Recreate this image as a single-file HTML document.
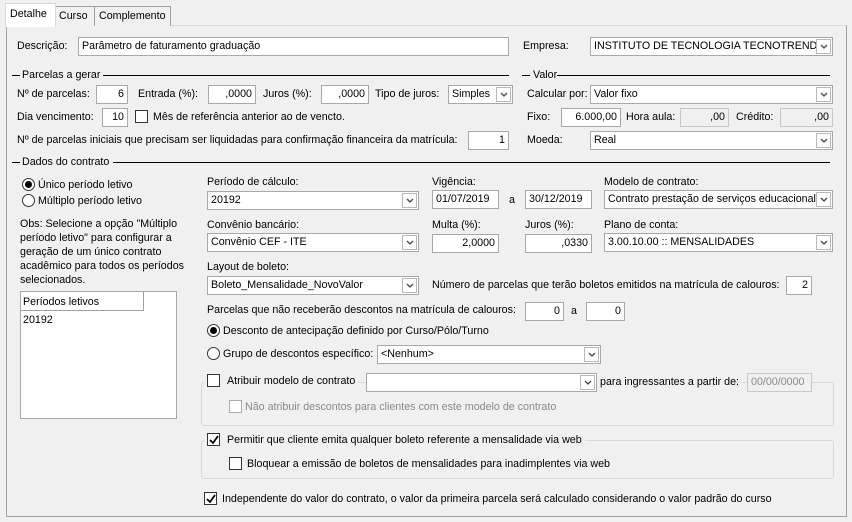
<!DOCTYPE html>
<html><head><meta charset="utf-8"><style>
*{box-sizing:border-box;margin:0;padding:0}
body{width:852px;height:522px;background:#f0f0f0;font:10.7px "Liberation Sans",sans-serif;color:#000;position:relative;overflow:hidden}
.a{position:absolute;white-space:nowrap;line-height:13px}
.i{position:absolute;background:#fff;border:1px solid #a8a8a8;height:19px;line-height:15px;padding:1px 3px;white-space:nowrap;overflow:hidden}
.r{text-align:right}
.d{background:#f0f0f0;border-color:#c8c8c8}
.g{color:#8a8a8a}
.cb{position:absolute;right:1px;top:1px;width:15px;height:15px;border:1px solid #b8b8b8;background:#fff}
.cb svg{position:absolute;left:3px;top:4px}
.ln{position:absolute;height:1px;background:#000}
.chk{position:absolute;width:13px;height:13px;border:1px solid #333;background:#fff}
.chk.dis{border-color:#aaa}
.rad{position:absolute;width:13px;height:13px;border:1px solid #333;border-radius:50%;background:#fff}
.rad.on::after{content:"";position:absolute;left:2px;top:2px;width:7px;height:7px;border-radius:50%;background:#000}
.grp{position:absolute;border:1px solid #d8d8d8;border-radius:3px}
</style></head><body>
<div style="position:absolute;left:6px;top:25px;width:841px;height:492px;border:1px solid #a0a0a0;border-top-color:#d9d9d9"></div>
<div style="position:absolute;left:55px;top:6px;width:40px;height:20px;border:1px solid #a0a0a0;border-bottom:none;background:#f0f0f0"></div>
<div style="position:absolute;left:94px;top:6px;width:77px;height:20px;border:1px solid #a0a0a0;border-bottom:none;background:#f0f0f0"></div>
<div style="position:absolute;left:5px;top:3px;width:51px;height:24px;border:1px solid #d9d9d9;border-bottom:none;background:#fff"></div>
<div class="a" style="left:10px;top:8px">Detalhe</div>
<div class="a" style="left:59px;top:10px">Curso</div>
<div class="a" style="left:99px;top:10px">Complemento</div>

<div class="a" style="left:17px;top:40px">Descrição:</div>
<div class="i" style="left:78px;top:37px;width:431px">Parâmetro de faturamento graduação</div>
<div class="a" style="left:523px;top:40px">Empresa:</div>
<div class="i" style="left:590px;top:37px;width:243px">INSTITUTO DE TECNOLOGIA TECNOTRENDS<div class="cb"><svg width="8" height="6"><path d="M1 1L4 4L7 1" fill="none" stroke="#444" stroke-width="1.3"/></svg></div></div>

<div class="ln" style="left:12px;top:75px;width:8px"></div>
<div class="a" style="left:22px;top:69px">Parcelas a gerar</div>
<div class="ln" style="left:103px;top:75px;width:406px"></div>
<div class="ln" style="left:522px;top:75px;width:8px"></div>
<div class="a" style="left:533px;top:69px">Valor</div>
<div class="ln" style="left:557px;top:75px;width:273px"></div>

<div class="a" style="left:17px;top:88px">Nº de parcelas:</div>
<div class="i r" style="left:96px;top:85px;width:32px">6</div>
<div class="a" style="left:138px;top:88px">Entrada (%):</div>
<div class="i r" style="left:208px;top:85px;width:48px">,0000</div>
<div class="a" style="left:263px;top:88px">Juros (%):</div>
<div class="i r" style="left:321px;top:85px;width:48px">,0000</div>
<div class="a" style="left:375px;top:88px">Tipo de juros:</div>
<div class="i" style="left:448px;top:85px;width:65px">Simples<div class="cb"><svg width="8" height="6"><path d="M1 1L4 4L7 1" fill="none" stroke="#444" stroke-width="1.3"/></svg></div></div>
<div class="a" style="left:527px;top:88px">Calcular por:</div>
<div class="i" style="left:590px;top:85px;width:243px">Valor fixo<div class="cb"><svg width="8" height="6"><path d="M1 1L4 4L7 1" fill="none" stroke="#444" stroke-width="1.3"/></svg></div></div>

<div class="a" style="left:17px;top:111px">Dia vencimento:</div>
<div class="i r" style="left:102px;top:108px;width:26px">10</div>
<div class="chk" style="left:135px;top:110px"></div>
<div class="a" style="left:153px;top:111px">Mês de referência anterior ao de vencto.</div>
<div class="a" style="left:527px;top:111px">Fixo:</div>
<div class="i r" style="left:561px;top:108px;width:60px">6.000,00</div>
<div class="a" style="left:626px;top:111px">Hora aula:</div>
<div class="i r d" style="left:680px;top:108px;width:49px">,00</div>
<div class="a" style="left:736px;top:111px">Crédito:</div>
<div class="i r d" style="left:780px;top:108px;width:53px">,00</div>

<div class="a" style="left:17px;top:134px">Nº de parcelas iniciais que precisam ser liquidadas para confirmação financeira da matrícula:</div>
<div class="i r" style="left:468px;top:131px;width:41px">1</div>
<div class="a" style="left:527px;top:134px">Moeda:</div>
<div class="i" style="left:590px;top:131px;width:243px">Real<div class="cb"><svg width="8" height="6"><path d="M1 1L4 4L7 1" fill="none" stroke="#444" stroke-width="1.3"/></svg></div></div>

<div class="ln" style="left:12px;top:162px;width:8px"></div>
<div class="a" style="left:22px;top:156px">Dados do contrato</div>
<div class="ln" style="left:113px;top:162px;width:717px"></div>

<div class="rad on" style="left:22px;top:178px"></div>
<div class="a" style="left:38px;top:179px">Único período letivo</div>
<div class="rad" style="left:22px;top:194px"></div>
<div class="a" style="left:38px;top:195px">Múltiplo período letivo</div>
<div class="a" style="left:20px;top:217px;line-height:14px;white-space:normal;width:165px">Obs: Selecione a opção "Múltiplo período letivo" para configurar a geração de um único contrato acadêmico para todos os períodos selecionados.</div>
<div style="position:absolute;left:20px;top:291px;width:157px;height:128px;background:#fff;border:1px solid #a8a8a8"></div>
<div style="position:absolute;left:21px;top:292px;width:123px;height:19px;border-right:1px solid #a0a0a0;border-bottom:1px solid #a0a0a0;background:#fff"></div>
<div class="a" style="left:23px;top:296px">Períodos letivos</div>
<div class="a" style="left:23px;top:314px">20192</div>

<div class="a" style="left:207px;top:176px">Período de cálculo:</div>
<div class="i" style="left:207px;top:191px;width:212px">20192<div class="cb"><svg width="8" height="6"><path d="M1 1L4 4L7 1" fill="none" stroke="#444" stroke-width="1.3"/></svg></div></div>
<div class="a" style="left:432px;top:176px">Vigência:</div>
<div class="i" style="left:432px;top:190px;width:67px">01/07/2019</div>
<div class="a" style="left:509px;top:194px">a</div>
<div class="i" style="left:525px;top:190px;width:67px">30/12/2019</div>
<div class="a" style="left:604px;top:176px">Modelo de contrato:</div>
<div class="i" style="left:604px;top:190px;width:229px">Contrato prestação de serviços educacional<div class="cb"><svg width="8" height="6"><path d="M1 1L4 4L7 1" fill="none" stroke="#444" stroke-width="1.3"/></svg></div></div>

<div class="a" style="left:207px;top:219px">Convênio bancário:</div>
<div class="i" style="left:207px;top:233px;width:212px">Convênio CEF - ITE<div class="cb"><svg width="8" height="6"><path d="M1 1L4 4L7 1" fill="none" stroke="#444" stroke-width="1.3"/></svg></div></div>
<div class="a" style="left:432px;top:219px">Multa (%):</div>
<div class="i r" style="left:432px;top:234px;width:67px">2,0000</div>
<div class="a" style="left:525px;top:219px">Juros (%):</div>
<div class="i r" style="left:525px;top:234px;width:67px">,0330</div>
<div class="a" style="left:604px;top:219px">Plano de conta:</div>
<div class="i" style="left:604px;top:233px;width:229px">3.00.10.00 :: MENSALIDADES<div class="cb"><svg width="8" height="6"><path d="M1 1L4 4L7 1" fill="none" stroke="#444" stroke-width="1.3"/></svg></div></div>

<div class="a" style="left:207px;top:261px">Layout de boleto:</div>
<div class="i" style="left:207px;top:276px;width:212px">Boleto_Mensalidade_NovoValor<div class="cb"><svg width="8" height="6"><path d="M1 1L4 4L7 1" fill="none" stroke="#444" stroke-width="1.3"/></svg></div></div>
<div class="a" style="left:432px;top:279px">Número de parcelas que terão boletos emitidos na matrícula de calouros:</div>
<div class="i r" style="left:786px;top:276px;width:26px">2</div>

<div class="a" style="left:207px;top:304px">Parcelas que não receberão descontos na matrícula de calouros:</div>
<div class="i r" style="left:525px;top:302px;width:39px">0</div>
<div class="a" style="left:571px;top:305px">a</div>
<div class="i r" style="left:586px;top:302px;width:39px">0</div>

<div class="rad on" style="left:207px;top:324px"></div>
<div class="a" style="left:223px;top:325px">Desconto de antecipação definido por Curso/Pólo/Turno</div>
<div class="rad" style="left:207px;top:347px"></div>
<div class="a" style="left:223px;top:348px">Grupo de descontos específico:</div>
<div class="i" style="left:377px;top:345px;width:224px">&lt;Nenhum&gt;<div class="cb"><svg width="8" height="6"><path d="M1 1L4 4L7 1" fill="none" stroke="#444" stroke-width="1.3"/></svg></div></div>

<div class="grp" style="left:201px;top:382px;width:633px;height:44px"></div>
<div class="chk" style="left:207px;top:374px;outline:3px solid #f0f0f0"></div>
<div class="a" style="left:223px;top:375px;background:#f0f0f0;padding:0 3px 0 4px">Atribuir modelo de contrato</div>
<div class="i" style="left:366px;top:373px;width:231px"><div class="cb"><svg width="8" height="6"><path d="M1 1L4 4L7 1" fill="none" stroke="#444" stroke-width="1.3"/></svg></div></div>
<div class="a" style="left:597px;top:376px;background:#f0f0f0;padding:0 3px">para ingressantes a partir de:</div>
<div class="i d g" style="left:747px;top:373px;width:65px">00/00/0000</div>
<div class="chk dis" style="left:229px;top:400px"></div>
<div class="a g" style="left:245px;top:401px">Não atribuir descontos para clientes com este modelo de contrato</div>

<div class="grp" style="left:201px;top:440px;width:633px;height:39px"></div>
<div class="chk" style="left:207px;top:433px;outline:3px solid #f0f0f0"></div>
<svg style="position:absolute;left:209px;top:435px" width="10" height="10"><path d="M1 5L4 8L9 1" fill="none" stroke="#000" stroke-width="1.8"/></svg>
<div class="a" style="left:223px;top:434px;background:#f0f0f0;padding:0 3px 0 4px">Permitir que cliente emita qualquer boleto referente a mensalidade via web</div>
<div class="chk" style="left:229px;top:457px"></div>
<div class="a" style="left:247px;top:458px">Bloquear a emissão de boletos de mensalidades para inadimplentes via web</div>

<div class="chk" style="left:204px;top:492px"></div>
<svg style="position:absolute;left:206px;top:494px" width="10" height="10"><path d="M1 5L4 8L9 1" fill="none" stroke="#000" stroke-width="1.8"/></svg>
<div class="a" style="left:222px;top:493px">Independente do valor do contrato, o valor da primeira parcela será calculado considerando o valor padrão do curso</div>
</body></html>
